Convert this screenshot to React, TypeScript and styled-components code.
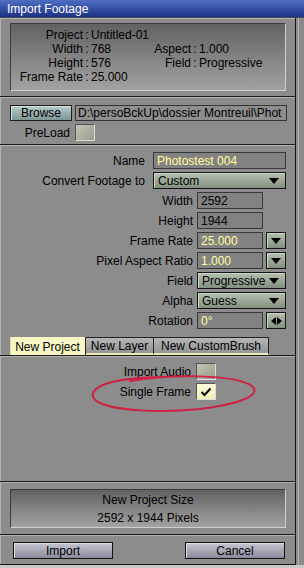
import React from 'react'
import styled, { createGlobalStyle } from 'styled-components'

const GlobalStyle = createGlobalStyle`
  html, body {
    margin: 0;
    padding: 0;
    background: #8c8c8c;
  }
  body {
    font-family: "Liberation Sans", Arial, sans-serif;
    font-size: 12px;
    color: #000;
  }
`

const Screen = styled.div`
  width: 304px;
  height: 568px;
  overflow: hidden;
  position: relative;
  display: flex;
  flex-direction: column;
  background: #8c8c8c;
`
const TitleBar = styled.div`
  height: 17px;
  flex: none;
  display: flex;
  align-items: center;
  padding-left: 7px;
  background: linear-gradient(#4f6ec4, #1c3284);
  border-bottom: 1px solid #4a4a4a;
  color: #fff;
  font-size: 12px;
`
const Body = styled.div`
  display: flex;
  height: 547px;
  flex: none;
`
const Window = styled.div`
  width: 295px;
  display: flex;
  flex-direction: column;
  border-right: 1px solid #111;
  border-bottom: 1px solid #111;
`
const SideStrip = styled.div`
  flex: 1;
  background: #8a8a8a;
  border-left: 2px solid #8c8c8c;
  box-shadow: inset 1px 0 0 #b4b4b4;
`
const Footer = styled.div`
  flex: 1;
  background: #c6cbc4;
`

const Section = styled.div<{ $pad: string; $grow?: boolean }>`
  padding: ${p => p.$pad};
  border-top: 1px solid #1a1a1a;
  box-shadow: inset 1px 1px 0 #b2b2b2;
  flex: ${p => (p.$grow ? 1 : 'none')};
  display: flex;
  flex-direction: column;
  &:first-child {
    border-top: none;
  }
`

const InfoPanel = styled.div<{ $h: number }>`
  height: ${p => p.$h}px;
  box-sizing: border-box;
  border: 1px solid;
  border-color: #3c3c3c #cfcfcf #cfcfcf #3c3c3c;
  background: linear-gradient(#626262, #a2a2a2);
`
const InfoGrid = styled.div`
  display: grid;
  grid-template-columns: 72px 8px 59px 41px 8px 1fr;
  grid-auto-rows: 14px;
  line-height: 14px;
  padding-top: 4px;
`
const InfoLabel = styled.span`
  text-align: right;
`
const Colon = styled.span`
  text-align: center;
`
const SizeText = styled.div`
  text-align: center;
  line-height: 18px;
  padding-top: 1px;
`

const BrowseRow = styled.div`
  display: flex;
  gap: 3px;
  height: 16px;
`
const BrowseButton = styled.div`
  width: 62px;
  box-sizing: border-box;
  border: 1px solid #1c1c1c;
  background: linear-gradient(#b8cccc, #7e9696);
  box-shadow: inset 1px 1px 0 #d8e4e4;
  display: flex;
  align-items: center;
  justify-content: center;
  line-height: 1;
`
const PathField = styled.div`
  width: 212px;
  box-sizing: border-box;
  border: 1px solid #333;
  background: #8e8e8e;
  padding-left: 2px;
  white-space: nowrap;
  overflow: hidden;
  display: flex;
  align-items: center;
`
const PreloadRow = styled.div`
  display: flex;
  align-items: center;
  margin-top: 3px;
  height: 17px;
`
const PreloadLabel = styled.span`
  width: 60px;
  text-align: right;
  margin-right: 5px;
`

const Check = styled.div<{ $on?: boolean }>`
  width: 20px;
  height: 17px;
  box-sizing: border-box;
  border: 1px solid;
  border-color: #555 #dcdcdc #dcdcdc #555;
  background: ${p =>
    p.$on
      ? 'linear-gradient(#fdfdd8, #eeeeb8)'
      : 'linear-gradient(135deg, #c4c4b4, #9c9c8c)'};
  display: flex;
  align-items: center;
  justify-content: center;
`

const Row = styled.div`
  display: flex;
  justify-content: flex-end;
  align-items: center;
  height: 17px;
  & + & {
    margin-top: 3px;
  }
`
const Label = styled.span<{ $gap: number }>`
  margin-right: ${p => p.$gap}px;
  white-space: nowrap;
`
const TextField = styled.div<{ $w: number; $yellow?: boolean }>`
  width: ${p => p.$w}px;
  height: 17px;
  box-sizing: border-box;
  border: 1px solid #383838;
  background: #828282;
  color: ${p => (p.$yellow ? '#ffff9e' : '#000')};
  padding-left: 3px;
  display: flex;
  align-items: center;
`
const Dropdown = styled.div<{ $w: number }>`
  width: ${p => p.$w}px;
  height: 17px;
  box-sizing: border-box;
  border: 1px solid #141414;
  background: linear-gradient(#b4c0b0, #82907e);
  box-shadow: inset 1px 1px 0 #ccd6c8;
  display: flex;
  align-items: center;
  justify-content: space-between;
  padding: 0 6px 0 4px;
`
const SquareButton = styled.div`
  width: 20px;
  height: 17px;
  box-sizing: border-box;
  margin-left: 3px;
  border: 1px solid #141414;
  background: linear-gradient(#b4c0b0, #82907e);
  box-shadow: inset 1px 1px 0 #ccd6c8;
  display: flex;
  align-items: center;
  justify-content: center;
`
const Spacer = styled.div`
  width: 23px;
`

const Tabs = styled.div`
  display: flex;
  margin-top: 8px;
  height: 18px;
`
const Tab = styled.div<{ $w: number; $active?: boolean }>`
  width: ${p => p.$w}px;
  box-sizing: border-box;
  display: flex;
  align-items: center;
  justify-content: center;
  padding-top: 1px;
  ${p =>
    p.$active
      ? `background: #f7f7c6;
         border-right: 1px solid #2a2a2a;
         box-shadow: inset 1px 0 0 #d8d8a8;`
      : `background: linear-gradient(#b6b6b6, #949494);
         border: 1px solid #222;
         border-left: none;
         border-bottom: 2px solid #ecebb8;`}
`

const OptionRows = styled.div`
  display: flex;
  flex-direction: column;
  padding-right: 79px;
`

const ButtonBar = styled.div`
  display: flex;
  justify-content: space-between;
  padding: 0 10px 0 13px;
`
const ActionButton = styled.div`
  width: 100px;
  height: 17px;
  box-sizing: border-box;
  border: 1px solid #111;
  background: linear-gradient(#c6c6d2, #8a8a9a);
  box-shadow: inset 1px 1px 0 #dedee8;
  display: flex;
  align-items: center;
  justify-content: center;
`

const Scribble = styled.svg`
  position: absolute;
  left: 85px;
  top: 368px;
  pointer-events: none;
`

const Down = () => (
  <svg width="10" height="6" viewBox="0 0 10 6">
    <polygon points="0,0 10,0 5,6" fill="#000" />
  </svg>
)

const LeftRight = () => (
  <svg width="11" height="8" viewBox="0 0 11 8">
    <polygon points="0,4 5,0 5,8" fill="#000" />
    <polygon points="11,4 6,0 6,8" fill="#000" />
  </svg>
)

const Tick = () => (
  <svg width="12" height="10" viewBox="0 0 12 10">
    <path d="M1.5 5 L4.5 8 L10.5 1.5" stroke="#000" strokeWidth="2" fill="none" />
  </svg>
)

export default function App() {
  return (
    <Screen>
      <GlobalStyle />
      <TitleBar>Import Footage</TitleBar>
      <Body>
        <Window>
          <Section $pad="5px 9px 5px 10px">
            <InfoPanel $h={68}>
              <InfoGrid>
                <InfoLabel>Project</InfoLabel><Colon>:</Colon><span>Untitled-01</span>
                <span /><span /><span />
                <InfoLabel>Width</InfoLabel><Colon>:</Colon><span>768</span>
                <InfoLabel>Aspect</InfoLabel><Colon>:</Colon><span>1.000</span>
                <InfoLabel>Height</InfoLabel><Colon>:</Colon><span>576</span>
                <InfoLabel>Field</InfoLabel><Colon>:</Colon><span>Progressive</span>
                <InfoLabel>Frame Rate</InfoLabel><Colon>:</Colon><span>25.000</span>
              </InfoGrid>
            </InfoPanel>
          </Section>

          <Section $pad="8px 8px 3px 10px">
            <BrowseRow>
              <BrowseButton>Browse</BrowseButton>
              <PathField>D:\persoBckUp\dossier Montreuil\Phot</PathField>
            </BrowseRow>
            <PreloadRow>
              <PreloadLabel>PreLoad</PreloadLabel>
              <Check />
            </PreloadRow>
          </Section>

          <Section $pad="7px 9px 0 10px">
            <Row>
              <Label $gap={8}>Name</Label>
              <TextField $w={133} $yellow>Photostest 004</TextField>
            </Row>
            <Row>
              <Label $gap={8}>Convert Footage to</Label>
              <Dropdown $w={133}>Custom<Down /></Dropdown>
            </Row>
            <Row>
              <Label $gap={4}>Width</Label>
              <TextField $w={66}>2592</TextField>
              <Spacer />
            </Row>
            <Row>
              <Label $gap={4}>Height</Label>
              <TextField $w={66}>1944</TextField>
              <Spacer />
            </Row>
            <Row>
              <Label $gap={4}>Frame Rate</Label>
              <TextField $w={66} $yellow>25.000</TextField>
              <SquareButton><Down /></SquareButton>
            </Row>
            <Row>
              <Label $gap={4}>Pixel Aspect Ratio</Label>
              <TextField $w={66} $yellow>1.000</TextField>
              <SquareButton><Down /></SquareButton>
            </Row>
            <Row>
              <Label $gap={4}>Field</Label>
              <Dropdown $w={89}>Progressive<Down /></Dropdown>
            </Row>
            <Row>
              <Label $gap={4}>Alpha</Label>
              <Dropdown $w={89}>Guess<Down /></Dropdown>
            </Row>
            <Row>
              <Label $gap={4}>Rotation</Label>
              <TextField $w={66} $yellow>0°</TextField>
              <SquareButton><LeftRight /></SquareButton>
            </Row>
            <Tabs>
              <Tab $w={76} $active>New Project</Tab>
              <Tab $w={68}>New Layer</Tab>
              <Tab $w={115}>New CustomBrush</Tab>
            </Tabs>
          </Section>

          <Section $pad="7px 0 0 0" $grow>
            <OptionRows>
              <Row>
                <Label $gap={5}>Import Audio</Label>
                <Check />
              </Row>
              <Row>
                <Label $gap={5}>Single Frame</Label>
                <Check $on><Tick /></Check>
              </Row>
            </OptionRows>
          </Section>

          <Section $pad="7px 9px 6px 10px">
            <InfoPanel $h={39}>
              <SizeText>
                New Project Size
                <br />
                2592 x 1944 Pixels
              </SizeText>
            </InfoPanel>
          </Section>

          <Section $pad="7px 0 5px 0">
            <ButtonBar>
              <ActionButton>Import</ActionButton>
              <ActionButton>Cancel</ActionButton>
            </ButtonBar>
          </Section>
        </Window>
        <SideStrip />
      </Body>
      <Footer />

      <Scribble width="180" height="50" viewBox="0 0 180 50">
        <path
          d="M45 13 C85 6, 150 6, 167 18 C177 27, 155 36, 115 41 C75 45, 30 43, 13 34 C3 28, 7 19, 27 14 C45 10, 65 9, 80 9"
          stroke="#d4163c"
          strokeWidth="2"
          strokeLinecap="round"
          fill="none"
          opacity="0.9"
        />
      </Scribble>
    </Screen>
  )
}
